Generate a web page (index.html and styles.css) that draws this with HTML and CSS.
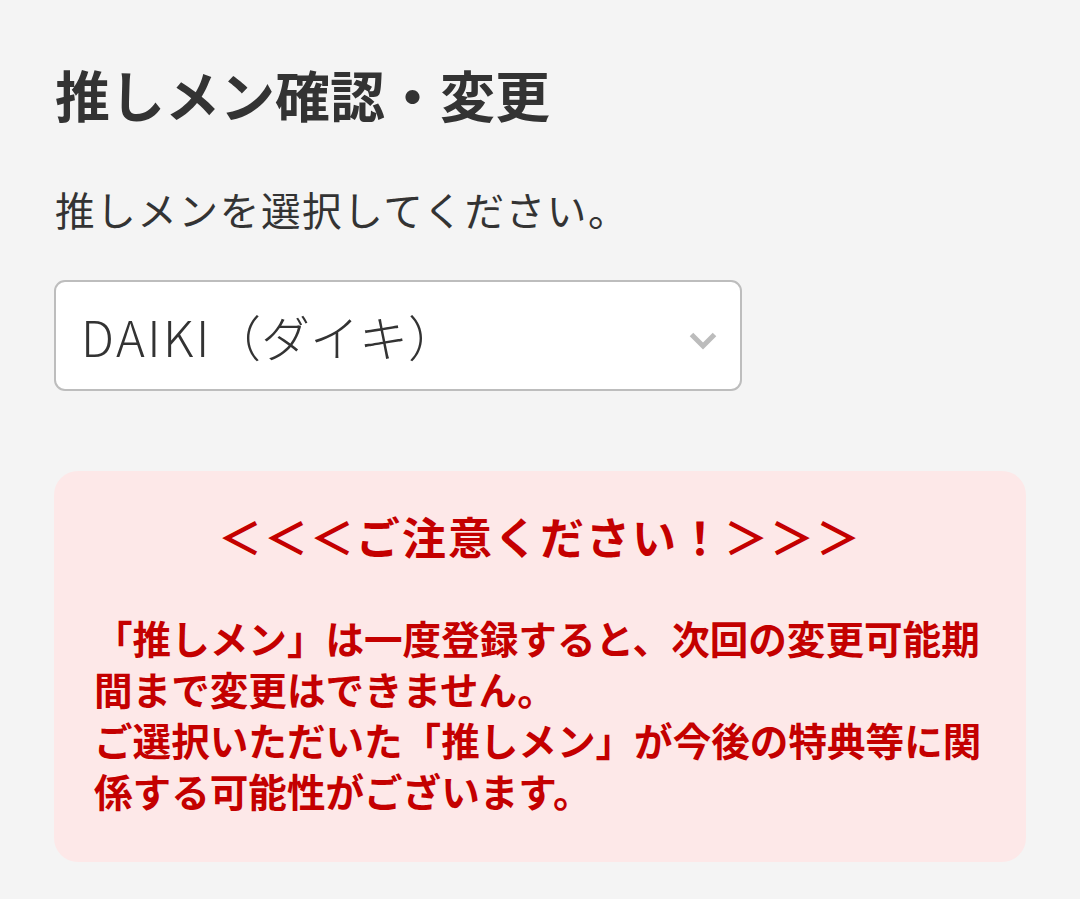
FILE: index.html
```html
<!DOCTYPE html>
<html lang="ja">
<head>
<meta charset="utf-8">
<link rel="stylesheet" href="styles.css">
</head>
<body>
<main class="page">
  <h1 class="title">推しメン確認・変更</h1>
  <p class="lead">推しメンを選択してください。</p>
  <div class="select">
    <span class="select-value"><span class="latin">DAIKI</span>（ダイキ）</span>
    <svg class="chevron" width="28" height="18" viewBox="0 0 28 18"><path d="M2.5 2.5 L14 14 L25.5 2.5" fill="none" stroke="#bcbcbc" stroke-width="5" stroke-linecap="butt" stroke-linejoin="miter"/></svg>
  </div>
  <section class="notice">
    <h2 class="notice-title">＜＜＜ご注意ください！＞＞＞</h2>
    <p class="notice-body">「推しメン」は一度登録すると、次回の変更可能期間まで変更はできません。<br>ご選択いただいた「推しメン」が今後の特典等に関係する可能性がございます。</p>
  </section>
</main>
</body>
</html>
```
FILE: styles.css
```css
html, body {
  margin: 0;
  padding: 0;
  background: #f4f4f4;
}
body {
  font-family: "Noto Sans CJK JP", "Noto Sans", sans-serif;
  color: #333;
}
.page {
  padding: 57px 54px 0 54px;
}
.title {
  margin: 0 0 0 1px;
  font-size: 55px;
  font-weight: 700;
  line-height: 72px;
}
.lead {
  margin: 54px 0 0 1px;
  font-size: 39.6px;
  font-weight: 400;
  letter-spacing: 1.6px;
  line-height: 52px;
}
.select {
  margin-top: 45px;
  width: 688px;
  height: 111px;
  box-sizing: border-box;
  border: 2px solid #bdbdbd;
  border-radius: 11px;
  background: #fff;
  display: flex;
  align-items: center;
  justify-content: space-between;
  padding: 0 23px 0 25px;
}
.select-value {
  font-size: 49px;
  font-weight: 300;
  color: #333;
  line-height: 1;
}
.latin {
  letter-spacing: 2.5px;
}
.chevron {
  display: block;
  margin-top: 10px;
}
.notice {
  margin-top: 80px;
  width: 972px;
  box-sizing: border-box;
  background: #fde8e8;
  border-radius: 24px;
  padding: 33px 40px 46px 40px;
}
.notice-title {
  margin: 0;
  text-align: center;
  color: #c40000;
  font-size: 44px;
  font-weight: 700;
  letter-spacing: 2px;
  line-height: 64px;
}
.notice-body {
  margin: 44px 0 0 0;
  color: #c40000;
  font-size: 38.6px;
  font-weight: 700;
  line-height: 51px;
}
```
